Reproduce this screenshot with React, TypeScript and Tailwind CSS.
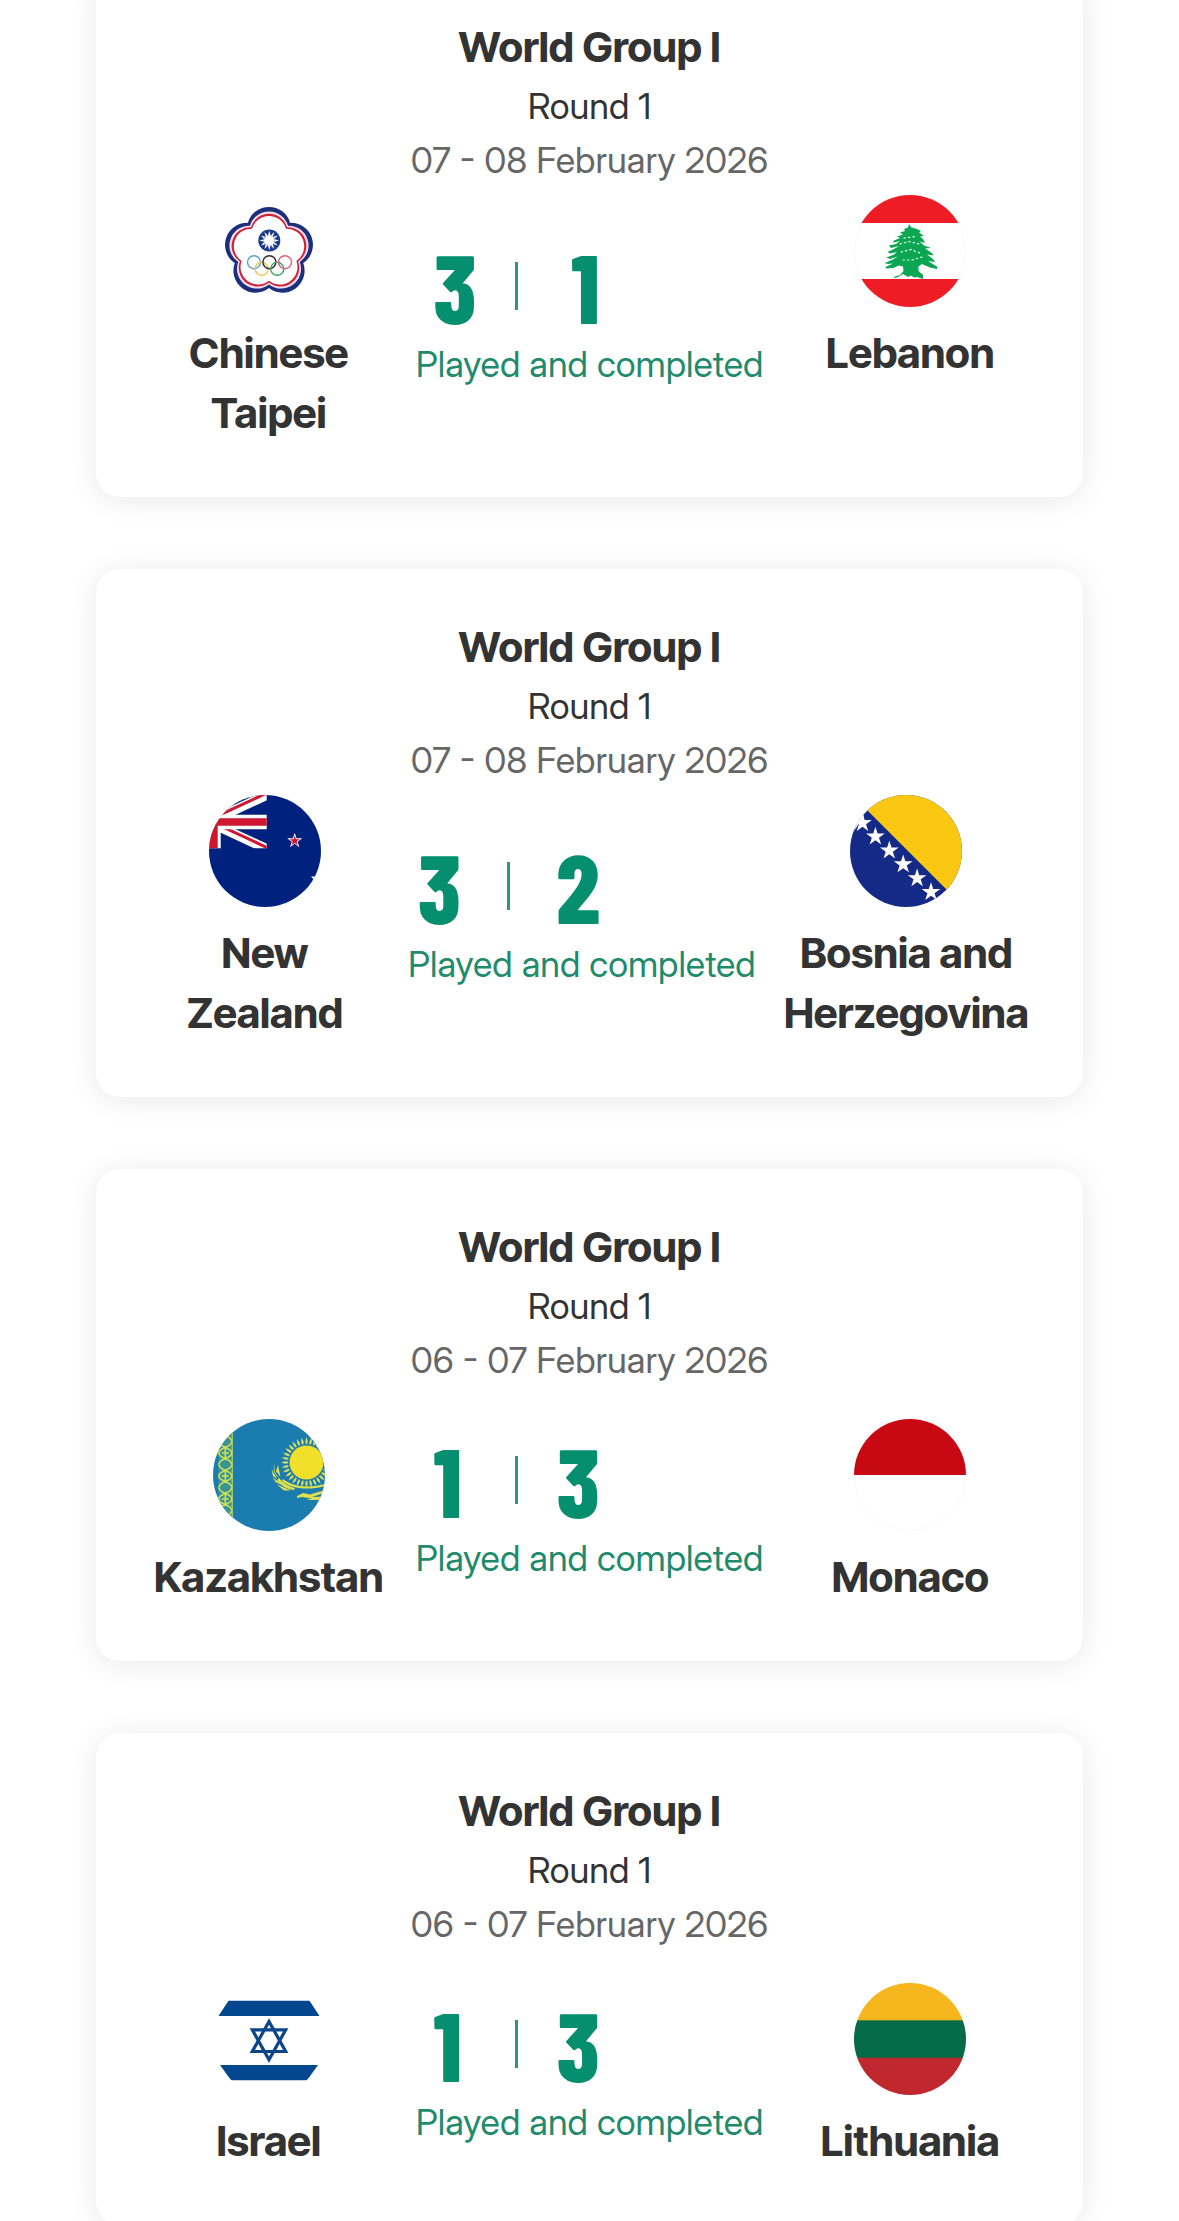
import type { ReactNode } from 'react';

/* ---------- geometry helpers ---------- */

function polar(cx: number, cy: number, r: number, deg: number): [number, number] {
  const a = ((deg - 90) * Math.PI) / 180;
  return [cx + r * Math.cos(a), cy + r * Math.sin(a)];
}

function starPoints(cx: number, cy: number, r: number, inner = 0.382) {
  const pts: string[] = [];
  for (let i = 0; i < 10; i++) {
    const [x, y] = polar(cx, cy, i % 2 === 0 ? r : r * inner, i * 36);
    pts.push(`${x.toFixed(2)},${y.toFixed(2)}`);
  }
  return pts.join(' ');
}

/* ---------- flags, all on a 112 x 112 canvas ---------- */

function Flag({ id, label, children }: { id: string; label: string; children: ReactNode }) {
  return (
    <svg viewBox="0 0 112 112" role="img" aria-label={label} className="size-28">
      <defs>
        <clipPath id={`clip-${id}`}>
          <circle cx="56" cy="56" r="56" />
        </clipPath>
      </defs>
      <g clipPath={`url(#clip-${id})`}>{children}</g>
    </svg>
  );
}

function ChineseTaipei() {
  const notches = [0, 1, 2, 3, 4].map((k) => polar(0, 0, 36, 36 + 72 * k));
  const petals =
    `M${notches[4].join(' ')}` + notches.map((p) => `A22 22 0 0 1 ${p.join(' ')}`).join('') + 'Z';
  const layers: [number, string][] = [
    [1, '#1b2f7d'],
    [0.9, '#f3dcea'],
    [0.85, '#cf2338'],
    [0.8, '#ffffff'],
  ];
  const rays = Array.from({ length: 12 }, (_, i) => i * 30);
  return (
    <Flag id="tpe" label="Flag of Chinese Taipei">
      <rect width="112" height="112" fill="#fff" />
      {layers.map(([scale, fill]) => (
        <path key={fill} d={petals} fill={fill} transform={`translate(56 57) scale(${scale})`} />
      ))}
      <circle cx="56.3" cy="45.5" r="11" fill="#1b3a8a" />
      <g fill="#fff">
        {rays.map((a) => (
          <path key={a} d="M-1.2 -5.5L0 -9.8L1.2 -5.5Z" transform={`translate(56.3 45.5) rotate(${a})`} />
        ))}
        <circle cx="56.3" cy="45.5" r="5.4" />
      </g>
      <g fill="none" strokeWidth="1.4">
        <circle cx="41" cy="67.2" r="6.5" stroke="#5aa3cf" />
        <circle cx="48.6" cy="73.8" r="6.5" stroke="#ecc95a" />
        <circle cx="56.4" cy="67.2" r="6.5" stroke="#2c2c2c" />
        <circle cx="64.2" cy="73.8" r="6.5" stroke="#4aa564" />
        <circle cx="72" cy="67.2" r="6.5" stroke="#d9637c" />
      </g>
    </Flag>
  );
}

function Lebanon() {
  return (
    <Flag id="lbn" label="Flag of Lebanon">
      <rect width="112" height="112" fill="#fff" />
      <circle cx="56" cy="56" r="55.5" fill="none" stroke="#f8f8f8" />
      <rect width="112" height="28" fill="#ee1c25" />
      <rect y="84" width="112" height="28" fill="#ee1c25" />
      <path
        fill="#0ba651"
        d="M55 29L57.5 32.5L63 34L67 36L65 37.5L70 41L66 41.5L69 44L71 48L65.5 46.5L70 50.5L77 53L71 53.5L78 58L79.5 60.5L73 59.5L79 64L81 67L74 66L83.5 72L83 74L76 72.5L68 69L64.5 71.5L64.5 76L69 80L69 84L63 82L60 82.5L57 80.5L54 82L49 79L45 81.5L39.5 83.5L41 81.5L46 80L49.5 76L49 71.5L45 70.5L39 73L32 73.5L31.5 72L39 68.5L34 69L30.5 68L38 65L44 61.5L36 64L32.5 62.5L40 59.5L43 57L36 58.5L33.5 57L40 54L45 51L37 53L35 50.5L42 49L46 46L40 47.5L39 46L46 43L43 41.5L49 39.5L46 37.5L51 36L50 34L54 32.5Z"
      />
      <g fill="none" stroke="#e6f7ed" strokeWidth="1.2" strokeLinecap="round" strokeDasharray="1.5 3">
        <path d="M50 43L62 41.5" />
        <path d="M46 49L55 46.5L65 49" />
        <path d="M47 57L57 54.5L66 58" />
        <path d="M49 65L58 65L68 62" />
      </g>
    </Flag>
  );
}

function NewZealand() {
  return (
    <Flag id="nzl" label="Flag of New Zealand">
      <defs>
        <clipPath id="nzl-canton">
          <rect width="57.7" height="53.3" />
        </clipPath>
      </defs>
      <rect width="112" height="112" fill="#00217d" />
      <g clipPath="url(#nzl-canton)">
        <path d="M0 27L60 -1M0 27L60 55" stroke="#fff" strokeWidth="9.5" />
        <path d="M0 25L60 -3" stroke="#cf1630" strokeWidth="3" />
        <path d="M0 25.5L60 53.5" stroke="#cf1630" strokeWidth="3" />
        <path d="M0 19.7H58V34.3H11.7V54H0Z" fill="#fff" />
        <path d="M0 23.3H58V30.7H8.7V54H0Z" fill="#cf1630" />
      </g>
      <polygon points={starPoints(85.7, 45.7, 8)} fill="#fff" />
      <polygon points={starPoints(85.7, 45.9, 5.4)} fill="#cf1630" />
      <path d="M102 81.5L106.5 81.5L105 85Z" fill="#fff" />
    </Flag>
  );
}

function Bosnia() {
  const stars: [number, number][] = [
    [12.5, 28],
    [25.4, 41.6],
    [39.3, 55.6],
    [53.2, 69.4],
    [67.1, 83.2],
    [81, 97],
  ];
  return (
    <Flag id="bih" label="Flag of Bosnia and Herzegovina">
      <rect width="112" height="112" fill="#152a86" />
      <path d="M0 -2L114 112V-2Z" fill="#fac813" />
      {stars.map(([x, y]) => (
        <polygon key={x} points={starPoints(x, y, 9.8)} fill="#fff" />
      ))}
      <path d="M4 36L8 22L12 18L14 21L10 27Z" fill="#fff" />
    </Flag>
  );
}

function Kazakhstan() {
  const rays = Array.from({ length: 32 }, (_, i) => i * 11.25);
  return (
    <Flag id="kaz" label="Flag of Kazakhstan">
      <rect width="112" height="112" fill="#1b7cb0" />
      <rect x="5.5" width="14" height="112" fill="#3a9592" />
      <g fill="none" stroke="#d2df50" strokeWidth="1.6">
        {[11, 34, 57, 80, 103].map((y) => (
          <g key={y} transform={`translate(12.3 ${y})`}>
            <path d="M-6.5 -11.5C-6.5 -5 6.5 -6 6.5 0S-6.5 5 -6.5 11.5" />
            <path d="M6.5 -11.5C6.5 -5 -6.5 -6 -6.5 0S6.5 5 6.5 11.5" />
            <path d="M0 -7V7M-3.5 0H3.5" />
          </g>
        ))}
        <path d="M19.2 0V112" strokeWidth="1" />
      </g>
      <g fill="#f0e02a">
        <circle cx="93.5" cy="43.5" r="17" />
        {rays.map((a) => (
          <path
            key={a}
            fill="#d8de58"
            d="M-0.8 -18.5L-1.2 -21.5L0 -25.5L1.2 -21.5L0.8 -18.5Z"
            transform={`translate(93.5 43.5) rotate(${a})`}
          />
        ))}
      </g>
      <g fill="#dfe04a">
        <path d="M61.5 43C60.5 50 62 55 66 59C64 58.5 58.5 53 61.5 43Z" />
        <path d="M65 46L67.5 58L63 52ZM58.5 50L64 60L60 57ZM59.5 58L69 66L63 63.5ZM64 65.5L78 71.5L71 71.5Z" />
        <path d="M66 59C70 64 75 67 82 69L81 71C73 70 67 66 64 61Z" />
        <path d="M70 60C79 67 93 70 112 65L112 67C94 72 78 69.5 69 62Z" />
        <path d="M84 77L90 74L97 75.5L112 71V73.5L99 78L112 77.5V81H93L99 79.5L89 78L84 79Z" />
      </g>
    </Flag>
  );
}

function Monaco() {
  return (
    <Flag id="mco" label="Flag of Monaco">
      <rect width="112" height="112" fill="#fff" />
      <circle cx="56" cy="56" r="55.5" fill="none" stroke="#f8f8f8" />
      <rect width="112" height="56" fill="#c80914" />
    </Flag>
  );
}

function Israel() {
  return (
    <Flag id="isr" label="Flag of Israel">
      <rect width="112" height="112" fill="#fff" />
      <path d="M15.5 17.7H96.5L106.5 33H5.5Z" fill="#03478f" />
      <path d="M7 82H105L94 97.3H18Z" fill="#03478f" />
      <g fill="none" stroke="#0b4689" strokeWidth="3.2">
        <path d="M56 38.5L72.7 68.5H39.3Z" />
        <path d="M56 76.8L72.7 46.8H39.3Z" />
      </g>
    </Flag>
  );
}

function Lithuania() {
  return (
    <Flag id="ltu" label="Flag of Lithuania">
      <rect width="112" height="38" fill="#f6b71e" />
      <rect y="37.3" width="112" height="38" fill="#036b48" />
      <rect y="74.7" width="112" height="38" fill="#c1282d" />
    </Flag>
  );
}

/* ---------- match cards ---------- */

type Side = { name: string; flag: ReactNode; score: number };
type Match = { dates: string; home: Side; away: Side; tall?: boolean };

const matches: Match[] = [
  {
    dates: '07 - 08 February 2026',
    home: { name: 'Chinese Taipei', flag: <ChineseTaipei />, score: 3 },
    away: { name: 'Lebanon', flag: <Lebanon />, score: 1 },
    tall: true,
  },
  {
    dates: '07 - 08 February 2026',
    home: { name: 'New Zealand', flag: <NewZealand />, score: 3 },
    away: { name: 'Bosnia and Herzegovina', flag: <Bosnia />, score: 2 },
    tall: true,
  },
  {
    dates: '06 - 07 February 2026',
    home: { name: 'Kazakhstan', flag: <Kazakhstan />, score: 1 },
    away: { name: 'Monaco', flag: <Monaco />, score: 3 },
  },
  {
    dates: '06 - 07 February 2026',
    home: { name: 'Israel', flag: <Israel />, score: 1 },
    away: { name: 'Lithuania', flag: <Lithuania />, score: 3 },
  },
];

function Team({ name, flag }: { name: string; flag: ReactNode }) {
  return (
    <div className="flex flex-1 flex-col items-center self-start px-6 pt-1 text-center">
      {flag}
      <h3 className="mt-4 text-[42px] leading-[60px] font-bold text-[#333333]">{name}</h3>
    </div>
  );
}

function Score({ home, away }: { home: number; away: number }) {
  /* The figure 1 is narrow, so a score that holds one takes a tighter row. */
  const narrow = home === 1 || away === 1;
  return (
    <div className={narrow ? 'w-[210px] px-[22px]' : 'w-[210px] px-[14px]'}>
      <div className="flex h-[94px] items-center pb-2 font-['Barlow_Condensed'] text-[96px] leading-[86px] font-extrabold text-[#058f6f]">
        <span className="flex-1 text-left">{home}</span>
        <span className="h-12 w-[3px] bg-[#2f9479]" />
        <span className="flex-1 text-right">{away}</span>
      </div>
    </div>
  );
}

function MatchCard({ match }: { match: Match }) {
  const { dates, home, away, tall } = match;
  return (
    <article className="rounded-3xl bg-white px-[30px] pt-12 pb-[54px] shadow-[0_3px_30px_rgba(0,0,0,0.09)]">
      <header className="text-center text-[36px] leading-[54px] text-[#333333]">
        <h2 className="text-[42px] leading-[60px] font-bold">World Group I</h2>
        <p className="mt-0.5 font-['Inter_Display']">Round 1</p>
        <p className="font-['Inter_Display'] text-[#666666]">{dates}</p>
      </header>
      <div className={tall ? 'mt-1 flex items-center' : 'mt-7 flex items-center'}>
        <Team name={home.name} flag={home.flag} />
        <div className="min-w-[356px]">
          <Score home={home.score} away={away.score} />
          <p className="text-center font-['Inter_Display'] text-[36px] leading-[54px] whitespace-nowrap text-[#1f8b6d]">
            Played and completed
          </p>
        </div>
        <Team name={away.name} flag={away.flag} />
      </div>
    </article>
  );
}

export default function App() {
  return (
    <main className="overflow-hidden bg-white px-24 font-['Inter_Tight','Inter',sans-serif]">
      <div className="-mt-[31px] flex flex-col gap-[72px]">
        {matches.map((m) => (
          <MatchCard key={m.home.name} match={m} />
        ))}
      </div>
    </main>
  );
}
